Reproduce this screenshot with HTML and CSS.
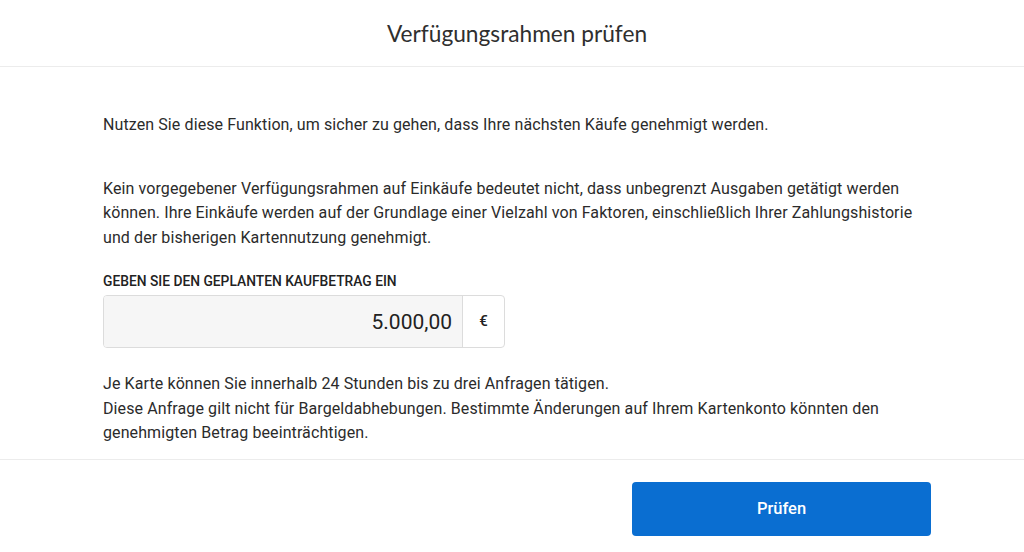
FILE: index.html
```html
<!DOCTYPE html>
<html lang="de">
<head>
    <meta charset="UTF-8">
    <meta name="viewport" content="width=device-width, initial-scale=1.0">
    <title>Verfügungsrahmen prüfen</title>
    <link rel="stylesheet" href="styles.css">
</head>
<body>
    <header class="dialog-header">
        <h1>Verfügungsrahmen prüfen</h1>
    </header>

    <main class="dialog-body">
        <p class="intro">Nutzen Sie diese Funktion, um sicher zu gehen, dass Ihre nächsten Käufe genehmigt werden.</p>

        <p class="info">Kein vorgegebener Verfügungsrahmen auf Einkäufe bedeutet nicht, dass unbegrenzt Ausgaben getätigt werden können. Ihre Einkäufe werden auf der Grundlage einer Vielzahl von Faktoren, einschließlich Ihrer Zahlungshistorie und der bisherigen Kartennutzung genehmigt.</p>

        <label class="amount-label" for="amount">Geben Sie den geplanten Kaufbetrag ein</label>
        <div class="amount-field">
            <input id="amount" type="text" value="5.000,00">
            <span class="currency">€</span>
        </div>

        <p class="note">Je Karte können Sie innerhalb 24 Stunden bis zu drei Anfragen tätigen.<br>
        Diese Anfrage gilt nicht für Bargeldabhebungen. Bestimmte Änderungen auf Ihrem Kartenkonto könnten den genehmigten Betrag beeinträchtigen.</p>
    </main>

    <footer class="dialog-footer">
        <button class="check-button">Prüfen</button>
    </footer>
</body>
</html>
```

FILE: styles.css
```css
body {
    margin: 0;
    font-family: Roboto, 'Liberation Sans', sans-serif;
    background-color: #fff;
    color: #2b2b2b;
}
.dialog-header {
    height: 66px;
    border-bottom: 1px solid #ececec;
    display: flex;
    align-items: center;
    justify-content: center;
}
.dialog-header h1 {
    margin: 0;
    font-family: Lato, sans-serif;
    font-weight: normal;
    font-size: 22.7px;
    color: #2f2f2f;
    padding-left: 10px;
}
.dialog-body {
    padding: 46px 101px 13px 103px;
    font-size: 16px;
    letter-spacing: 0.1px;
    line-height: 24.5px;
}
.dialog-body p {
    margin: 0;
}
.intro {
    margin-bottom: 39px !important;
}
.info {
    margin-bottom: 23px !important;
}
.amount-label {
    display: block;
    font-size: 13.8px;
    font-weight: 500;
    letter-spacing: 0;
    text-transform: uppercase;
    color: #222;
    line-height: 16px;
    margin-bottom: 6px;
}
.amount-field {
    display: flex;
    width: 400px;
    height: 51px;
    border: 1px solid #dcdcdc;
    border-radius: 4px;
    overflow: hidden;
    margin-bottom: 24px;
}
.amount-field input {
    flex: 1;
    min-width: 0;
    border: none;
    background-color: #f6f6f6;
    font-family: Roboto, sans-serif;
    font-size: 21px;
    color: #222;
    text-align: right;
    padding: 0 10px;
    outline: none;
}
.currency {
    width: 41px;
    border-left: 1px solid #dcdcdc;
    display: flex;
    align-items: center;
    justify-content: center;
    font-size: 15px;
    font-weight: 500;
    color: #222;
}
.dialog-footer {
    border-top: 1px solid #ececec;
    padding: 22px 93px 0 0;
    display: flex;
    justify-content: flex-end;
}
.check-button {
    width: 299px;
    height: 54px;
    background-color: #0a6ed1;
    color: #fff;
    border: none;
    border-radius: 4px;
    font-family: Roboto, sans-serif;
    font-size: 16.5px;
    font-weight: 500;
    cursor: pointer;
}
```
